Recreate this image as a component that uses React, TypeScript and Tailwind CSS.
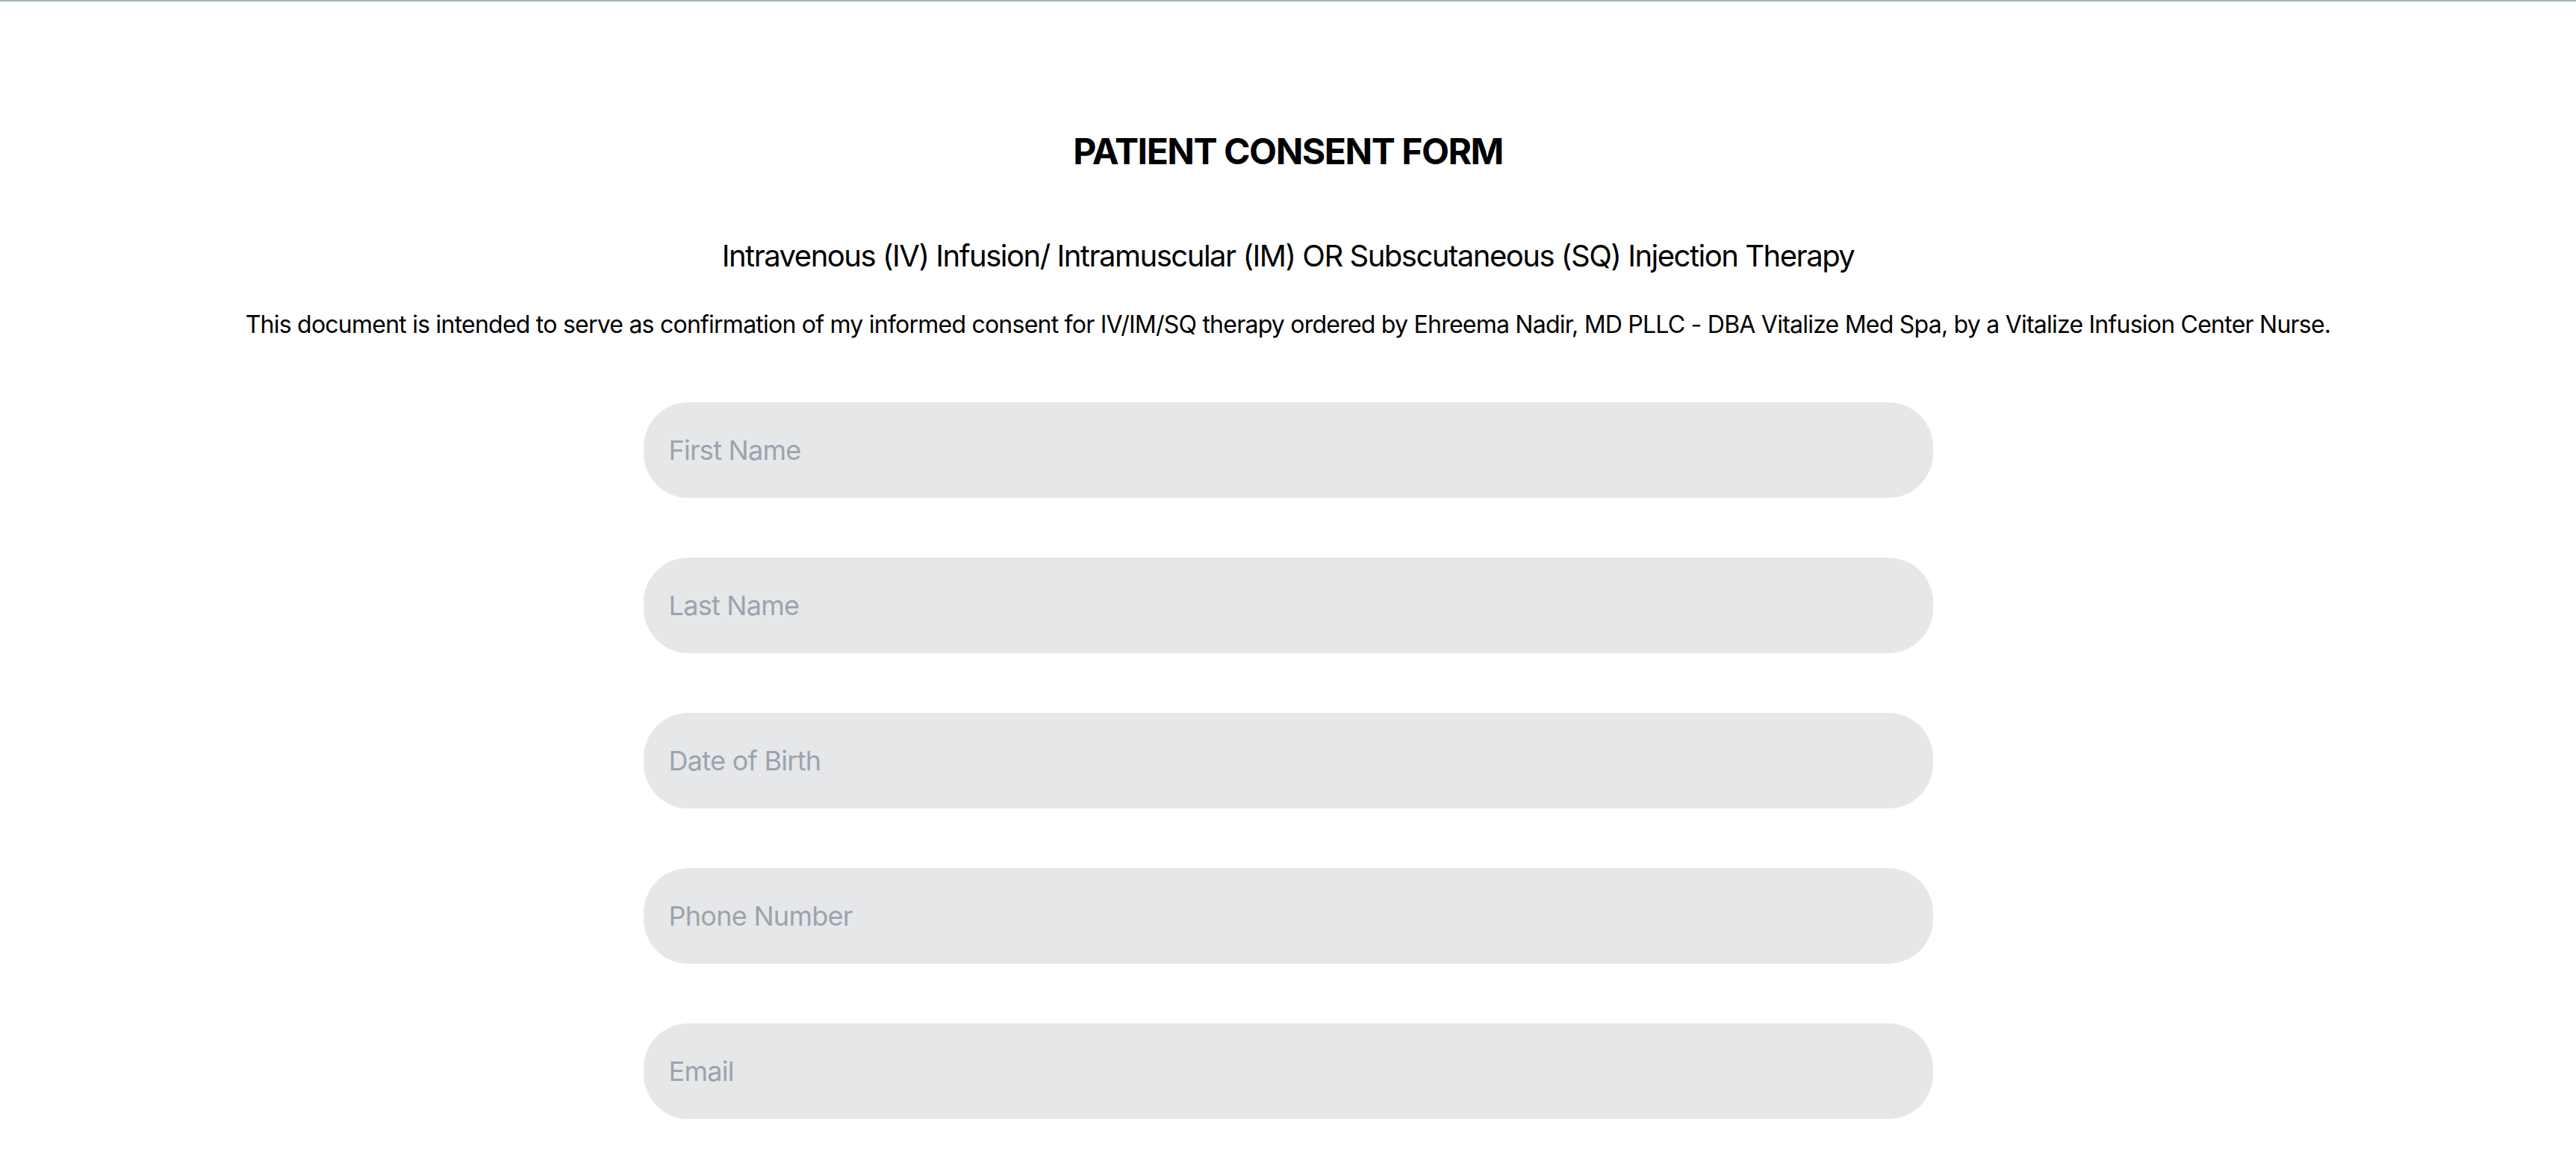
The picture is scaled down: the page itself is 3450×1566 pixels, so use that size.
const fields = ['First Name', 'Last Name', 'Date of Birth', 'Phone Number', 'Email'];

export default function App() {
  return (
    <div className="min-h-screen bg-white border-t-2 border-[#9fb6b9] font-['Inter',sans-serif] text-black">
      <main className="pt-[169px] pb-[120px]">
        <h1 className="text-center text-[48px] leading-[64px] font-bold tracking-[-0.03em] mb-[80px]">PATIENT CONSENT FORM</h1>
        <h2 className="text-center text-[40px] leading-[56px] tracking-[-0.037em] mb-[40px]">
          Intravenous (IV) Infusion/ Intramuscular (IM) OR Subscutaneous (SQ) Injection Therapy
        </h2>
        <p className="text-center text-[32px] leading-[48px] tracking-[-0.024em] mb-[80px]">
          This document is intended to serve as confirmation of my informed consent for IV/IM/SQ therapy ordered by Ehreema Nadir, MD PLLC - DBA Vitalize Med Spa, by a Vitalize Infusion Center Nurse.
        </p>

        <form className="w-[1727px] mx-auto flex flex-col gap-[80px]">
          {fields.map((f) => (
            <input
              key={f}
              type="text"
              placeholder={f}
              className="h-[128px] w-full rounded-[60px] bg-[#e6e7e9] px-[34px] text-[36px] tracking-[-0.02em] text-black placeholder-[#9ca3af] outline-none"
            />
          ))}
        </form>
      </main>
    </div>
  );
}
